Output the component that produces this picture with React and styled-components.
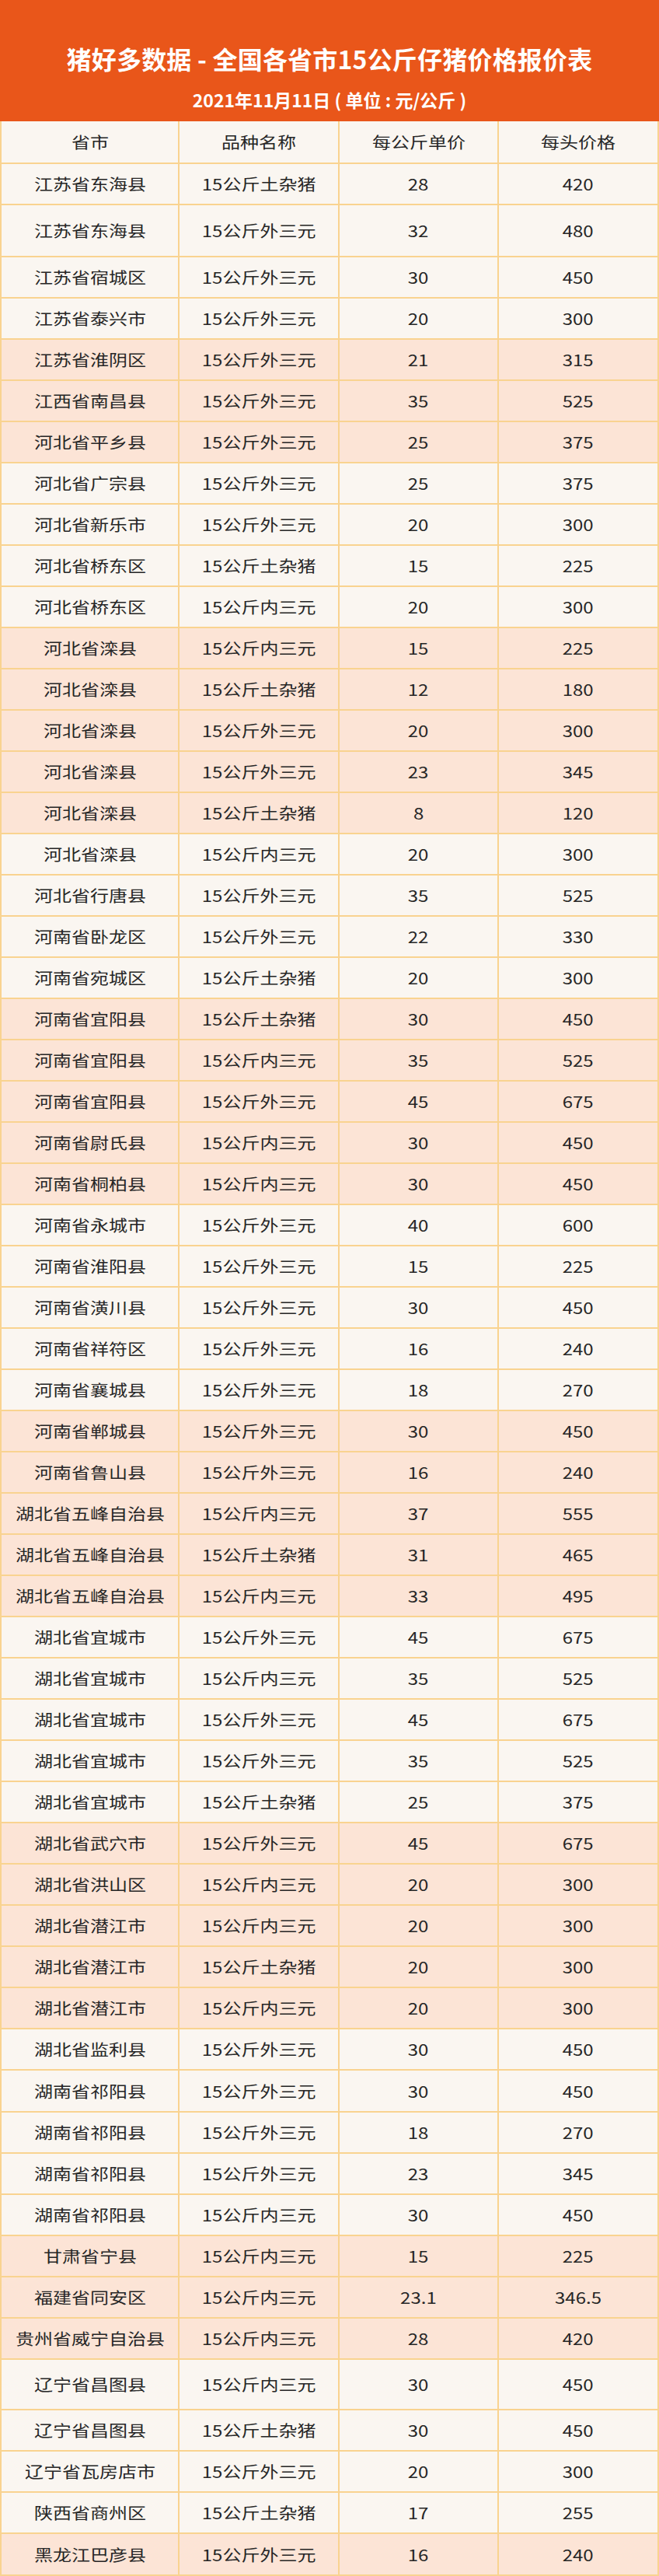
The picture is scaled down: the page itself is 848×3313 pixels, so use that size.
import React from "react";
import styled, { createGlobalStyle } from "styled-components";

const GlobalStyle = createGlobalStyle`
  html, body { margin: 0; padding: 0; background: #ffffff; }
  body { font-family: "Noto Sans CJK SC", "Noto Sans", sans-serif; }
  * { box-sizing: border-box; }
`;

const Page = styled.div`
  width: 848px;
  display: flex;
  flex-direction: column;
`;

const Banner = styled.header`
  height: 156px;
  background: #e9561a;
  display: flex;
  flex-direction: column;
  align-items: center;
  padding-top: 55px;
  color: #ffffff;
`;

const Title = styled.h1`
  margin: 0;
  font-size: 32px;
  line-height: 40px;
  font-weight: 700;
  letter-spacing: 0.2px;
  white-space: nowrap;
`;

const Subtitle = styled.div`
  margin-top: 18px;
  font-size: 23px;
  line-height: 30px;
  font-weight: 700;
  white-space: nowrap;
`;

const Table = styled.div`
  display: flex;
  flex-direction: column;
`;

const Row = styled.div`
  display: grid;
  grid-template-columns: 231px 206px 205px 1fr;
  height: ${(p) => p.$h}px;
  background: ${(p) => (p.$pink ? "#fce4d6" : "#faf6f1")};
`;

const Cell = styled.div`
  display: flex;
  align-items: center;
  justify-content: center;
  border-right: 2px solid #f9d390;
  border-bottom: 2px solid #f9d390;
  &:first-child { border-left: 2px solid #f9d390; }
  color: #262626;
  font-size: 20px;
  white-space: nowrap;
  overflow: visible;
`;

const Stretch = styled.span`
  display: inline-block;
  transform: scaleX(1.2);
  transform-origin: center;
`;

const raw = `江苏省东海县|15公斤土杂猪|28|420
江苏省东海县|15公斤外三元|32|480
江苏省宿城区|15公斤外三元|30|450
江苏省泰兴市|15公斤外三元|20|300
江苏省淮阴区|15公斤外三元|21|315
江西省南昌县|15公斤外三元|35|525
河北省平乡县|15公斤外三元|25|375
河北省广宗县|15公斤外三元|25|375
河北省新乐市|15公斤外三元|20|300
河北省桥东区|15公斤土杂猪|15|225
河北省桥东区|15公斤内三元|20|300
河北省滦县|15公斤内三元|15|225
河北省滦县|15公斤土杂猪|12|180
河北省滦县|15公斤外三元|20|300
河北省滦县|15公斤外三元|23|345
河北省滦县|15公斤土杂猪|8|120
河北省滦县|15公斤内三元|20|300
河北省行唐县|15公斤外三元|35|525
河南省卧龙区|15公斤外三元|22|330
河南省宛城区|15公斤土杂猪|20|300
河南省宜阳县|15公斤土杂猪|30|450
河南省宜阳县|15公斤内三元|35|525
河南省宜阳县|15公斤外三元|45|675
河南省尉氏县|15公斤内三元|30|450
河南省桐柏县|15公斤内三元|30|450
河南省永城市|15公斤外三元|40|600
河南省淮阳县|15公斤外三元|15|225
河南省潢川县|15公斤外三元|30|450
河南省祥符区|15公斤外三元|16|240
河南省襄城县|15公斤外三元|18|270
河南省郸城县|15公斤外三元|30|450
河南省鲁山县|15公斤外三元|16|240
湖北省五峰自治县|15公斤内三元|37|555
湖北省五峰自治县|15公斤土杂猪|31|465
湖北省五峰自治县|15公斤内三元|33|495
湖北省宜城市|15公斤外三元|45|675
湖北省宜城市|15公斤内三元|35|525
湖北省宜城市|15公斤外三元|45|675
湖北省宜城市|15公斤外三元|35|525
湖北省宜城市|15公斤土杂猪|25|375
湖北省武穴市|15公斤外三元|45|675
湖北省洪山区|15公斤内三元|20|300
湖北省潜江市|15公斤内三元|20|300
湖北省潜江市|15公斤土杂猪|20|300
湖北省潜江市|15公斤内三元|20|300
湖北省监利县|15公斤外三元|30|450
湖南省祁阳县|15公斤外三元|30|450
湖南省祁阳县|15公斤外三元|18|270
湖南省祁阳县|15公斤外三元|23|345
湖南省祁阳县|15公斤内三元|30|450
甘肃省宁县|15公斤内三元|15|225
福建省同安区|15公斤内三元|23.1|346.5
贵州省威宁自治县|15公斤内三元|28|420
辽宁省昌图县|15公斤内三元|30|450
辽宁省昌图县|15公斤土杂猪|30|450
辽宁省瓦房店市|15公斤外三元|20|300
陕西省商州区|15公斤土杂猪|17|255
黑龙江巴彦县|15公斤外三元|16|240`;

const pinkRows = new Set([5, 6, 7, 12, 13, 14, 15, 16, 21, 22, 23, 24, 25, 31, 32, 33, 34, 35, 41, 42, 43, 44, 45, 51, 52, 53, 58]);
const heights = { 2: 67, 47: 54, 54: 65, 58: 54 };

const rows = raw.split("\n").map((line, i) => {
  const [place, kind, unit, head] = line.split("|");
  const n = i + 1;
  return { n, place, kind, unit, head, pink: pinkRows.has(n), h: heights[n] || 53 };
});

const headers = ["省市", "品种名称", "每公斤单价", "每头价格"];

export default function App() {
  return (
    <Page>
      <GlobalStyle />
      <Banner>
        <Title>猪好多数据 - 全国各省市15公斤仔猪价格报价表</Title>
        <Subtitle>2021年11月11日 ( 单位 : 元/公斤 )</Subtitle>
      </Banner>
      <Table>
        <Row $h={55}>
          {headers.map((t) => (
            <Cell key={t}>
              <Stretch>{t}</Stretch>
            </Cell>
          ))}
        </Row>
        {rows.map((r) => (
          <Row key={r.n} $h={r.h} $pink={r.pink}>
            <Cell><Stretch>{r.place}</Stretch></Cell>
            <Cell><Stretch>{r.kind}</Stretch></Cell>
            <Cell><Stretch>{r.unit}</Stretch></Cell>
            <Cell><Stretch>{r.head}</Stretch></Cell>
          </Row>
        ))}
      </Table>
    </Page>
  );
}
